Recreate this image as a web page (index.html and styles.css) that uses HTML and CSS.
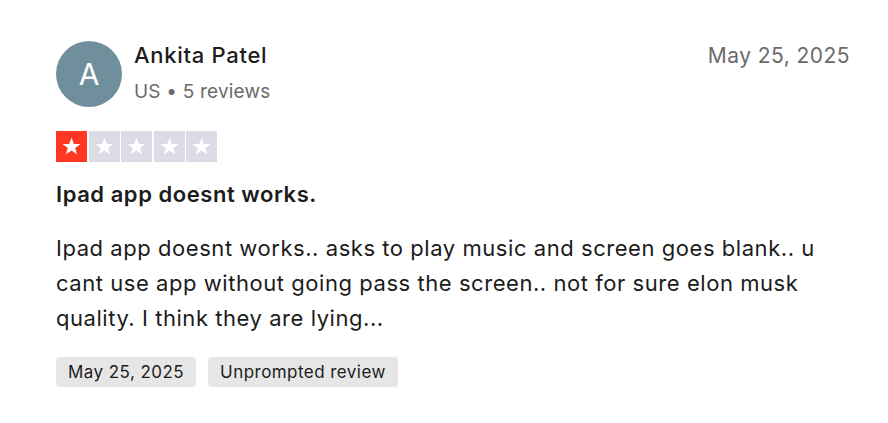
FILE: index.html
```html
<!DOCTYPE html>
<html>
<head>
<meta charset="utf-8">
<link rel="stylesheet" href="styles.css">
</head>
<body>
<article class="review">
  <header class="head">
    <div class="avatar">A</div>
    <div class="who">
      <div class="name">Ankita Patel</div>
      <div class="meta">US • 5 reviews</div>
    </div>
    <time class="date">May 25, 2025</time>
  </header>
  <div class="stars">
    <span class="star on"><svg viewBox="0 0 24 24"><path d="M12 3.5l2.3 6.1h6.4l-5.2 3.8 2 6.3L12 15.8l-5.5 3.9 2-6.3-5.2-3.8h6.4z"/></svg></span>
    <span class="star"><svg viewBox="0 0 24 24"><path d="M12 3.5l2.3 6.1h6.4l-5.2 3.8 2 6.3L12 15.8l-5.5 3.9 2-6.3-5.2-3.8h6.4z"/></svg></span>
    <span class="star"><svg viewBox="0 0 24 24"><path d="M12 3.5l2.3 6.1h6.4l-5.2 3.8 2 6.3L12 15.8l-5.5 3.9 2-6.3-5.2-3.8h6.4z"/></svg></span>
    <span class="star"><svg viewBox="0 0 24 24"><path d="M12 3.5l2.3 6.1h6.4l-5.2 3.8 2 6.3L12 15.8l-5.5 3.9 2-6.3-5.2-3.8h6.4z"/></svg></span>
    <span class="star"><svg viewBox="0 0 24 24"><path d="M12 3.5l2.3 6.1h6.4l-5.2 3.8 2 6.3L12 15.8l-5.5 3.9 2-6.3-5.2-3.8h6.4z"/></svg></span>
  </div>
  <h2 class="title">Ipad app doesnt works.</h2>
  <p class="body">Ipad app doesnt works.. asks to play music and screen goes blank.. u cant use app without going pass the screen.. not for sure elon musk quality. I think they are lying...</p>
  <div class="tags">
    <span class="tag">May 25, 2025</span>
    <span class="tag">Unprompted review</span>
  </div>
</article>
</body>
</html>
```
FILE: styles.css
```css
html, body {
  margin: 0;
  background: #ffffff;
}
body {
  font-family: Inter, "Noto Sans", sans-serif;
  color: #1c1c1c;
}
.review {
  padding: 41px 38px 0 56px;
}
.head {
  display: flex;
  align-items: flex-start;
}
.avatar {
  width: 66px;
  height: 66px;
  border-radius: 50%;
  background: #6f8f9c;
  color: #ffffff;
  font-size: 30px;
  display: flex;
  align-items: center;
  justify-content: center;
  flex: none;
}
.who {
  margin-left: 12px;
  flex: 1;
}
.name {
  font-size: 22px;
  font-weight: 500;
  letter-spacing: 0.7px;
  line-height: 28px;
  margin-top: 0;
}
.meta {
  font-size: 19px;
  letter-spacing: 0.2px;
  color: #6b6b6b;
  line-height: 26px;
  margin-top: 10px;
}
.date {
  font-size: 21px;
  letter-spacing: 0.45px;
  color: #6b6b6b;
  line-height: 26px;
  margin-top: 2px;
}
.stars {
  display: flex;
  gap: 1.5px;
  margin-top: 24px;
}
.star {
  width: 31px;
  height: 31px;
  background: #dcdce6;
  display: flex;
  align-items: center;
  justify-content: center;
}
.star.on {
  background: #ff3722;
}
.star svg {
  width: 25px;
  height: 25px;
  fill: #ffffff;
}
.title {
  font-size: 22px;
  font-weight: 600;
  letter-spacing: 0.55px;
  margin: 19px 0 0;
  line-height: 26px;
}
.body {
  font-size: 22px;
  letter-spacing: 0.55px;
  line-height: 35px;
  margin: 24px 0 0;
}
.tags {
  display: flex;
  gap: 12px;
  margin-top: 21px;
}
.tag {
  background: #e6e6e6;
  border-radius: 4px;
  font-size: 17px;
  letter-spacing: 0.45px;
  line-height: 30px;
  padding: 0 12px;
}
```
